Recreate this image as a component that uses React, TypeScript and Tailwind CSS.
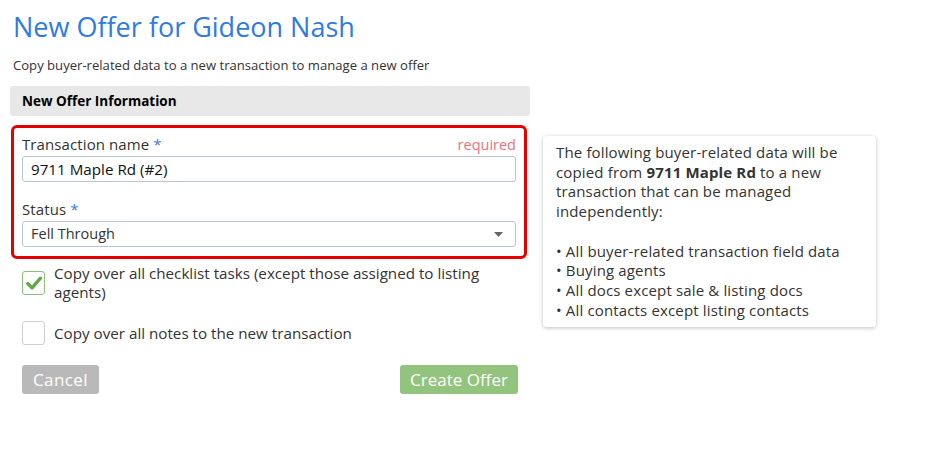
import React from "react";

function Caret() {
  return (
    <svg width="9" height="5" viewBox="0 0 9 5" className="text-[#666]">
      <path d="M0 0h9L4.5 5z" fill="currentColor" />
    </svg>
  );
}

function Check() {
  return (
    <svg width="16" height="14" viewBox="0 0 16 14">
      <path
        d="M1.8 7.6l4.3 4.2L14.4 2.2"
        fill="none"
        stroke="#66a64a"
        strokeWidth="3.4"
        strokeLinecap="round"
        strokeLinejoin="round"
      />
    </svg>
  );
}

export default function App() {
  return (
    <div
      className="min-h-[450px] w-[939px] bg-white text-[#333]"
      style={{ fontFamily: '"Open Sans", "Liberation Sans", sans-serif' }}
    >
      <div className="flex gap-[13px] px-[10px] pt-[10px]">
        {/* left column */}
        <div className="w-[520px]">
          <h1 className="pl-[3px] text-[27px] leading-[34px] text-[#2f7be0]">
            New Offer for Gideon Nash
          </h1>
          <p className="mt-[13px] pl-[3px] text-[13.1px] leading-[17px] text-[#333]">
            Copy buyer-related data to a new transaction to manage a new offer
          </p>

          <div className="mt-[12px] flex h-[30px] items-center rounded-[3px] bg-[#e8e8e8] px-[12px] text-[13.5px] font-bold text-black">
            New Offer Information
          </div>

          <div className="ml-[1px] mr-[3px] mt-[9px] rounded-[6px] border-[3px] border-[#e60000] px-[8px] pb-[9px] pt-[7px]">
            <div className="flex items-end justify-between text-[15px] leading-[19px] tracking-[0.1px]">
              <span>
                Transaction name <span className="text-[#3a7bd5]">*</span>
              </span>
              <span className="text-[14.5px] tracking-normal text-[#f0707e]">required</span>
            </div>
            <div className="mt-[2px] flex h-[26px] items-center rounded-[3px] border border-[#b8c6d4] px-[8px] text-[15.2px] text-[#111]">
              9711 Maple Rd (#2)
            </div>

            <div className="mt-[18px] text-[15px] leading-[19px] tracking-[0.1px]">
              Status <span className="text-[#3a7bd5]">*</span>
            </div>
            <div className="mt-[2px] flex h-[26px] items-center justify-between rounded-[3px] border border-[#b8c6d4] pl-[8px] pr-[12px] text-[14.5px] text-[#333]">
              <span>Fell Through</span>
              <Caret />
            </div>
          </div>

          <div className="mt-[5px] flex items-center gap-[9px] pl-[12px] pr-[8px]">
            <div className="flex h-[24px] w-[23px] shrink-0 items-center justify-center rounded-[3px] border border-[#8cbf78]">
              <Check />
            </div>
            <span className="text-[15.2px] leading-[19px]">
              Copy over all checklist tasks (except those assigned to listing agents)
            </span>
          </div>

          <div className="mt-[19px] flex items-center gap-[9px] pl-[12px]">
            <div className="h-[24px] w-[23px] shrink-0 rounded-[3px] border border-[#cfcfcf]" />
            <span className="text-[15.2px] leading-[19px]">
              Copy over all notes to the new transaction
            </span>
          </div>

          <div className="mt-[20px] flex justify-between pl-[12px] pr-[12px]">
            <button className="flex h-[29px] w-[77px] items-center justify-center rounded-[3px] bg-[#b9b9b9] text-[17px] tracking-[0.4px] text-white">
              Cancel
            </button>
            <button className="flex h-[29px] w-[118px] items-center justify-center rounded-[3px] bg-[#93c47d] text-[17px] text-white">
              Create Offer
            </button>
          </div>
        </div>

        {/* right info card */}
        <div className="mt-[126px] h-[191px] w-[333px] rounded-[4px] bg-white px-[13px] pt-[7px] text-[15px] leading-[19.7px] tracking-[0.15px] text-[#333] shadow-[0_1px_4px_rgba(0,0,0,0.25)]">
          <p>
            The following buyer-related data will be
            <br />
            copied from <b className="font-bold">9711 Maple Rd</b> to a new
            <br />
            transaction that can be managed
            <br />
            independently:
          </p>
          <p className="mt-[19.7px]">• All buyer-related transaction field data</p>
          <p>• Buying agents</p>
          <p>• All docs except sale &amp; listing docs</p>
          <p>• All contacts except listing contacts</p>
        </div>
      </div>
    </div>
  );
}
